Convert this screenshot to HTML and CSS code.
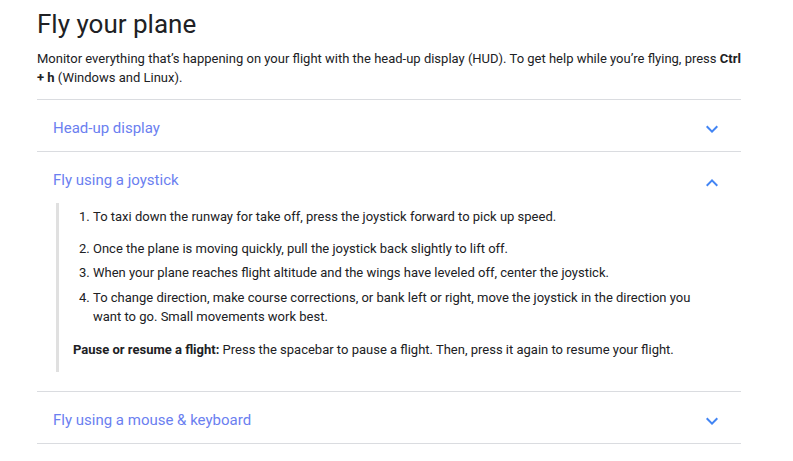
FILE: index.html
```html
<!DOCTYPE html>
<html>
<head>
<meta charset="utf-8">
<link rel="stylesheet" href="styles.css">
</head>
<body>
<main class="page">
  <h1 class="title">Fly your plane</h1>
  <p class="intro">Monitor everything that’s happening on your flight with the head-up display (HUD). To get help while you’re flying, press <b>Ctrl + h</b> (Windows and Linux).</p>
  <section class="accordion">
    <div class="item">
      <div class="header">
        <span class="label">Head-up display</span>
        <svg class="chev" width="24" height="24" viewBox="0 0 24 24"><path d="M7.41 8.59 12 13.17l4.59-4.58L18 10l-6 6-6-6z" fill="#4285f4"/></svg>
      </div>
    </div>
    <div class="item open">
      <div class="header">
        <span class="label">Fly using a joystick</span>
        <svg class="chev" width="24" height="24" viewBox="0 0 24 24"><path d="M7.41 15.41 12 10.83l4.59 4.58L18 14l-6-6-6 6z" fill="#4285f4"/></svg>
      </div>
      <div class="body">
        <ol class="steps">
          <li class="first">To taxi down the runway for take off, press the joystick forward to pick up speed.</li>
          <li>Once the plane is moving quickly, pull the joystick back slightly to lift off.</li>
          <li class="third">When your plane reaches flight altitude and the wings have leveled off, center the joystick.</li>
          <li>To change direction, make course corrections, or bank left or right, move the joystick in the direction you want to go. Small movements work best.</li>
        </ol>
        <p class="note"><b>Pause or resume a flight:</b> Press the spacebar to pause a flight. Then, press it again to resume your flight.</p>
      </div>
    </div>
    <div class="item">
      <div class="header">
        <span class="label">Fly using a mouse &amp; keyboard</span>
        <svg class="chev" width="24" height="24" viewBox="0 0 24 24"><path d="M7.41 8.59 12 13.17l4.59-4.58L18 10l-6 6-6-6z" fill="#4285f4"/></svg>
      </div>
    </div>
  </section>
</main>
</body>
</html>
```
FILE: styles.css
```css
* { box-sizing: border-box; }
body {
  margin: 0;
  background: #fff;
  font-family: Roboto, "Liberation Sans", Arial, sans-serif;
  color: #202124;
}
.page {
  width: 704px;
  margin-left: 37px;
  padding-top: 7px;
}
.title {
  margin: 0;
  font-size: 26px;
  font-weight: 400;
  line-height: 34px;
  color: #202124;
}
.intro {
  margin: 8px 0 0;
  font-size: 13px;
  line-height: 19px;
  color: #202124;
}
.intro b, .note b { font-weight: 700; }
.accordion {
  margin-top: 12px;
  border-top: 1px solid #dadce0;
}
.item {
  border-bottom: 1px solid #dadce0;
}
.header {
  display: flex;
  align-items: center;
  justify-content: space-between;
  height: 51px;
  padding: 4px 17px 0 16px;
}
.label {
  font-size: 15px;
  color: #6b80f0;
}
.chev { display: block; margin-top: 2px; }
.open .chev { margin-top: 6px; }
.body {
  margin: 0 48px 19px 19px;
  padding: 4px 0 13px 14px;
  border-left: 3px solid #e0e0e0;
  font-size: 13px;
  line-height: 19px;
  color: #202124;
}
.steps {
  margin: 0;
  padding-left: 20px;
}
.steps li { margin-bottom: 5px; }
.steps li.first { margin-bottom: 13px; }
.steps li.third { margin-bottom: 6px; }
.note {
  margin: 14px 0 0;
}
```
